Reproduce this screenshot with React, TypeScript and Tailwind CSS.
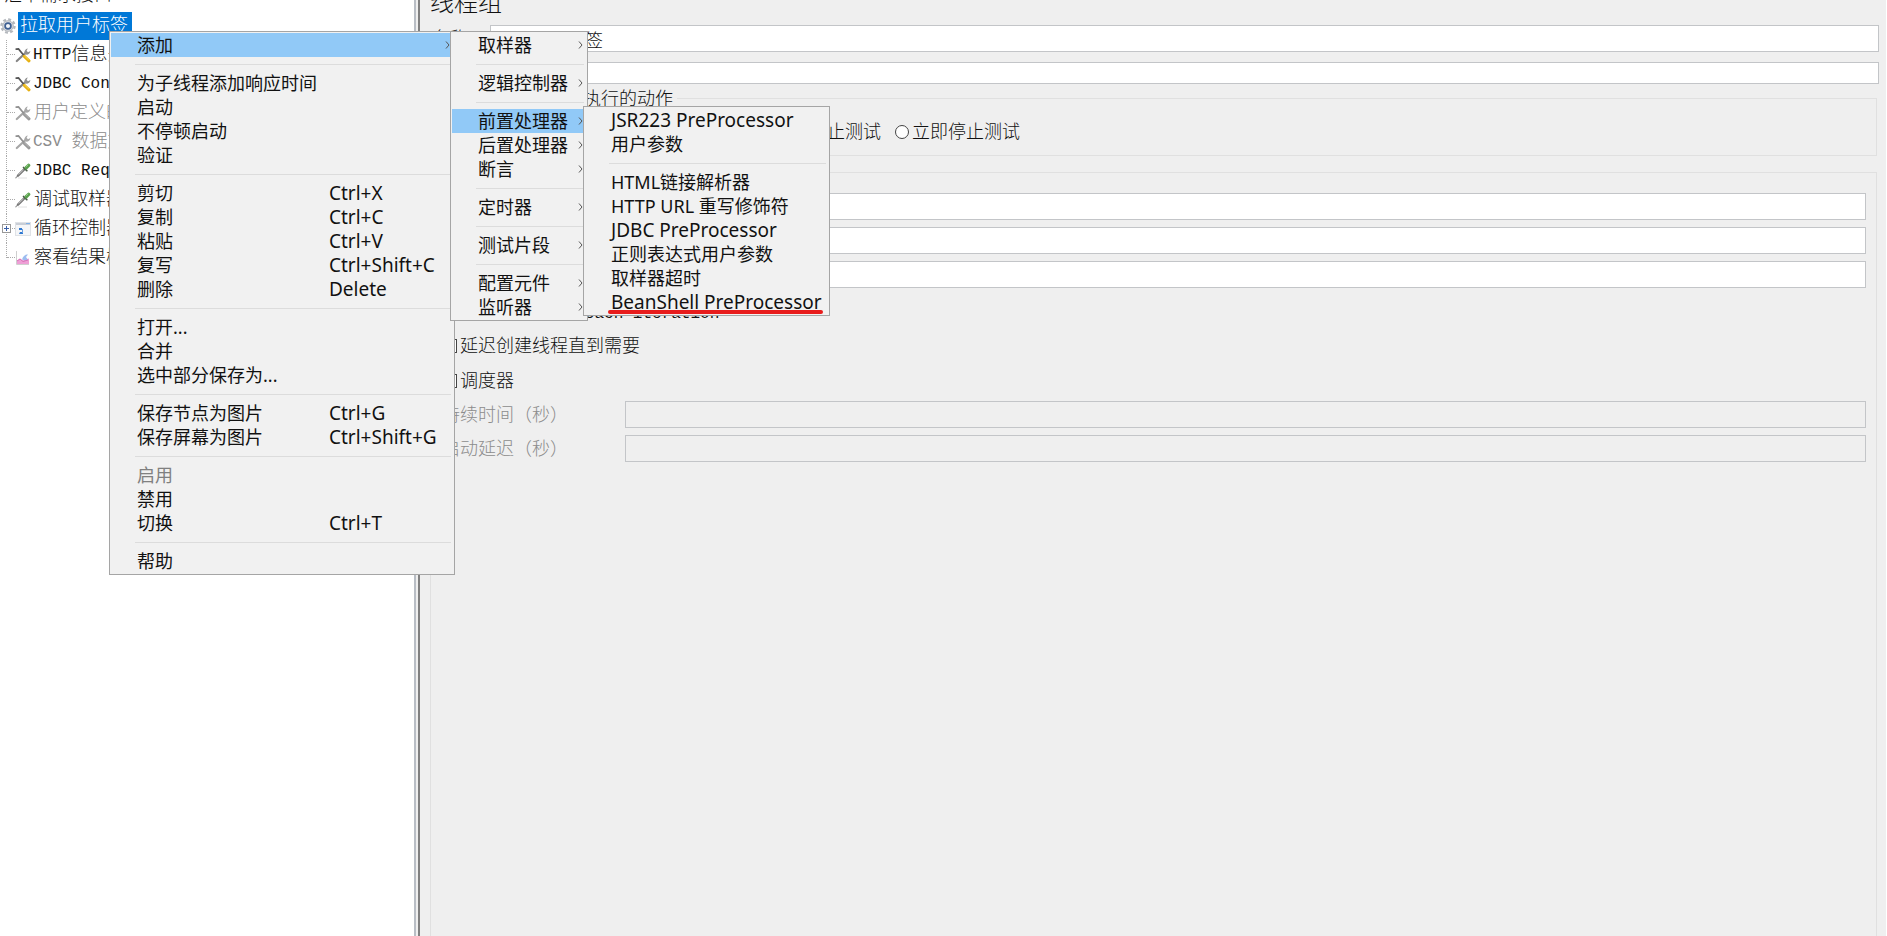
import { useState } from "react";
import type { ReactNode } from "react";

const sans = "font-['Noto_Sans','Noto_Sans_CJK_SC',sans-serif]";
const song = "font-['Liberation_Mono','Noto_Sans_CJK_SC',monospace]";

type Item = { label: string; keys?: string; latin?: boolean; active?: boolean; disabled?: boolean };

// each inner array is a group, groups are split by a separator
const mainMenu: Item[][] = [
  [{ label: "添加", active: true }],
  [
    { label: "为子线程添加响应时间" },
    { label: "启动" },
    { label: "不停顿启动" },
    { label: "验证" },
  ],
  [
    { label: "剪切", keys: "Ctrl+X" },
    { label: "复制", keys: "Ctrl+C" },
    { label: "粘贴", keys: "Ctrl+V" },
    { label: "复写", keys: "Ctrl+Shift+C" },
    { label: "删除", keys: "Delete" },
  ],
  [{ label: "打开..." }, { label: "合并" }, { label: "选中部分保存为..." }],
  [
    { label: "保存节点为图片", keys: "Ctrl+G" },
    { label: "保存屏幕为图片", keys: "Ctrl+Shift+G" },
  ],
  [
    { label: "启用", disabled: true },
    { label: "禁用" },
    { label: "切换", keys: "Ctrl+T" },
  ],
  [{ label: "帮助" }],
];

const addMenu: Item[][] = [
  [{ label: "取样器" }],
  [{ label: "逻辑控制器" }],
  [
    { label: "前置处理器", active: true },
    { label: "后置处理器" },
    { label: "断言" },
  ],
  [{ label: "定时器" }],
  [{ label: "测试片段" }],
  [{ label: "配置元件" }, { label: "监听器" }],
];

const preMenu: Item[][] = [
  [{ label: "JSR223 PreProcessor", latin: true }, { label: "用户参数" }],
  [
    { label: "HTML链接解析器" },
    { label: "HTTP URL 重写修饰符" },
    { label: "JDBC PreProcessor", latin: true },
    { label: "正则表达式用户参数" },
    { label: "取样器超时" },
    { label: "BeanShell PreProcessor", latin: true },
  ],
];

function Arrow() {
  return (
    <svg viewBox="0 0 5 8" className="h-2 w-[5px] shrink-0" fill="none" stroke="#555" aria-hidden="true">
      <path d="M1 0.5 4 4 1 7.5" />
    </svg>
  );
}

function Menu({
  groups,
  className,
  arrows,
  label,
  children,
}: {
  groups: Item[][];
  className: string;
  arrows?: boolean;
  label: string;
  children?: ReactNode;
}) {
  return (
    <div
      role="menu"
      aria-label={label}
      className={`absolute border border-[#a5a5a5] bg-[#f1f1f1] p-px text-lg text-[#111] ${sans} ${className}`}
    >
      {groups.map((group, i) => (
        <div key={i}>
          {i > 0 && (
            <div className="flex h-3.5 items-center pr-0.5 pl-6">
              <div className="h-px flex-1 bg-[#dcdcdc]" />
            </div>
          )}
          {group.map((item) => (
            <button
              key={item.label}
              type="button"
              role="menuitem"
              disabled={item.disabled}
              className={`flex h-6 w-full items-center pr-[3px] pl-[26px] text-left whitespace-nowrap disabled:text-[#808080] ${
                item.active ? "bg-[#91c9f7]" : ""
              }`}
            >
              <span className={`flex-1 leading-6 ${item.latin ? "text-[19px]" : ""}`}>{item.label}</span>
              {item.keys && <span className="w-[121px] text-[19px] leading-6">{item.keys}</span>}
              {(arrows || item.active) && <Arrow />}
            </button>
          ))}
        </div>
      ))}
      {children}
    </div>
  );
}

function GearIcon() {
  return (
    <svg viewBox="0 0 16 16" className="size-4 shrink-0" aria-hidden="true">
      <circle cx="8" cy="8" r="6.6" fill="none" stroke="#b4b8bd" strokeWidth="2.2" strokeDasharray="2.9 2.28" />
      <circle cx="8" cy="8" r="5.3" fill="#d9dce0" stroke="#b0b4ba" />
      <circle cx="8" cy="8" r="2.9" fill="#f3f6fa" stroke="#3d5f92" strokeWidth="1.7" />
    </svg>
  );
}

function ToolsIcon({ off }: { off?: boolean }) {
  return (
    <svg viewBox="0 0 16 16" className="size-4 shrink-0" fill="none" aria-hidden="true">
      <path d="M1.8 14 10.5 6" stroke={off ? "#a6a6a6" : "#858585"} strokeWidth="2.2" strokeLinecap="round" />
      <path
        d="M9.600 7c-.8-2.400.4-5 3.200-5.600l-1.200 2.400 1.400 1.400 2.400-1.200c-.2 2.800-2.600 4-4.600 3.600z"
        fill={off ? "#a8a8a8" : "#909090"}
      />
      <path d="M1.200 2.200 3.500 2 8.500 8" stroke={off ? "#919191" : "#555"} strokeWidth="1.700" strokeLinecap="round" />
      <path d="M9.300 9.300 14 13.800" stroke={off ? "#999" : "#e6b012"} strokeWidth="3" strokeLinecap="round" />
      <path d="M9.300 8.800 13.800 13" stroke={off ? "#b5b5b5" : "#f8d94e"} strokeWidth="1" />
    </svg>
  );
}

function DropperIcon() {
  return (
    <svg viewBox="0 0 16 16" className="size-4 shrink-0" fill="none" aria-hidden="true">
      <path d="M3 15h9" stroke="#e2e2e2" />
      <path d="M.800 14.800 3 12.600" stroke="#999" strokeWidth="1.200" strokeLinecap="round" />
      <path d="M3 12.600 9.500 6.200" stroke="#777" strokeWidth="2.400" strokeLinecap="round" />
      <path d="M3.500 11.600 8.500 6.800" stroke="#c4c4c4" strokeWidth="1" />
      <path d="M8.500 4.500 11.800 7.600" stroke="#4a5b48" strokeWidth="1.700" strokeLinecap="round" />
      <path d="M11.200 4.800 13.600 2.400" stroke="#58a04c" strokeWidth="3.400" strokeLinecap="round" />
      <path d="M11 3.800 13 1.900" stroke="#9ad08c" strokeWidth="1" strokeLinecap="round" />
    </svg>
  );
}

function LoopIcon() {
  return (
    <svg viewBox="0 0 16 16" className="size-4 shrink-0" aria-hidden="true">
      <rect x="0.500" y="1.500" width="15" height="13" fill="#f5f6f8" stroke="#dfe2e6" />
      <path d="M1 2h14v2H1z" fill="#c9ced6" />
      <path d="M11 2h4v1h-4z" fill="#7fb0e6" />
      <path d="M4 7h3v2H4zM5 11h3v2H4z" fill="#2f78d0" />
      <path d="M7.500 8v4" stroke="#6a9fe0" />
    </svg>
  );
}

function ChartIcon() {
  return (
    <svg viewBox="0 0 16 16" className="size-4 shrink-0" aria-hidden="true">
      <path d="M1.500 1v13.500H14" fill="none" stroke="#cfcfcf" />
      <path d="M2 14v-3.500l3-2 3 2 2-1 4-1V14z" fill="#ee9fd6" />
      <path d="M7 9.500C8 6 10 4.500 13 4.500L11 7l2 3-3 .5z" fill="#9dbcf0" />
      <path d="M2 11 5 9l3 2.500 5-1.500" fill="none" stroke="#d873b8" />
    </svg>
  );
}

const treeRows = [
  { icon: <ToolsIcon />, latin: "HTTP", text: "信息头管理器" },
  { icon: <ToolsIcon />, latin: "JDBC Connection", text: "" },
  { icon: <ToolsIcon off />, latin: "", text: "用户定义的变量", off: true },
  { icon: <ToolsIcon off />, latin: "CSV ", text: "数据文件设置", off: true },
  { icon: <DropperIcon />, latin: "JDBC Request", text: "" },
  { icon: <DropperIcon />, latin: "", text: "调试取样器" },
  { icon: <LoopIcon />, latin: "", text: "循环控制器", expandable: true },
  { icon: <ChartIcon />, latin: "", text: "察看结果树" },
];

function Tree() {
  return (
    <ul className="-mt-[18px] w-full whitespace-nowrap">
      <li className="h-[29px] pl-1 leading-7">汇丰需求接口</li>
      <li className="flex h-[29px] items-center gap-0.5">
        <GearIcon />
        <span className="bg-[#0078d7] pr-1 pl-0.5 leading-7 text-white">拉取用户标签</span>
      </li>
      {treeRows.map((row, i) => (
        <li key={i} className={`flex h-[29px] items-center ${row.off ? "text-[#8c8c8c]" : ""}`}>
          <span className="relative flex h-full w-[15px] shrink-0 items-center pl-[7px]">
            <span
              className={`absolute top-0 left-[6px] border-l border-dotted border-[#aaa] ${
                i === treeRows.length - 1 ? "h-1/2" : "h-full"
              }`}
            />
            <span className="w-full border-t border-dotted border-[#aaa]" />
            {row.expandable && (
              <button
                type="button"
                aria-label="展开"
                className="absolute left-[2px] flex size-[9px] items-center justify-center border border-[#999] bg-white"
              >
                <svg viewBox="0 0 7 7" className="size-[7px]" stroke="#3a5fa8" aria-hidden="true">
                  <path d="M1 3.500h5M3.500 1v5" />
                </svg>
              </button>
            )}
          </span>
          {row.icon}
          {row.latin && <span className="ml-0.5 text-base whitespace-pre">{row.latin}</span>}
          {row.text && <span className={row.latin ? "" : "ml-[3px]"}>{row.text}</span>}
        </li>
      ))}
    </ul>
  );
}

const errorActions = ["继续", "启动下一进程循环", "停止线程", "停止测试", "立即停止测试"];

function Field({ id, label, disabled }: { id: string; label: string; disabled?: boolean }) {
  return (
    <div className="flex h-[27px] items-center">
      <label htmlFor={id} className={`w-[184px] shrink-0 pt-0.5 pl-px ${disabled ? "text-[#8c8c8c]" : ""}`}>
        {label}
      </label>
      <input
        id={id}
        type="text"
        disabled={disabled}
        className="h-full min-w-0 flex-1 border border-[#c3c5c8] bg-white px-1 disabled:bg-[#efefef]"
      />
    </div>
  );
}

function Check({ label, latin }: { label: string; latin?: boolean }) {
  return (
    <label className="flex h-[35px] items-center gap-[3px] pl-0.5">
      <input type="checkbox" className="size-[14px] appearance-none border border-[#444] bg-white" />
      <span className={latin ? "pt-1.5 text-base" : "pt-0.5"}>{label}</span>
    </label>
  );
}

function ThreadGroupPanel() {
  const [name, setName] = useState("拉取用户标签");
  const [action, setAction] = useState("继续");

  return (
    <main className="flex min-w-0 flex-1 flex-col overflow-hidden pr-[7px] pl-[10px]">
      <h1 className="-mt-[10px] mb-[5px] text-2xl leading-[30px]">线程组</h1>
      <div className="flex h-[27px] items-center">
        <label htmlFor="name" className="w-[60px] shrink-0 pt-0.5 pl-0.5">名称：</label>
        <input
          id="name"
          type="text"
          value={name}
          onChange={(e) => setName(e.target.value)}
          className="h-full min-w-0 flex-1 border border-[#c3c5c8] bg-white px-1"
        />
      </div>
      <div className="mt-2.5 flex h-[22px] items-center">
        <label htmlFor="comment" className="w-[60px] shrink-0 pl-0.5">注释：</label>
        <input
          id="comment"
          type="text"
          className="h-full min-w-0 flex-1 border border-[#c3c5c8] bg-white px-1"
        />
      </div>

      <fieldset className="mr-0.5 border border-[#e0e0e0] pb-[3px]">
        <legend className="ml-1 pt-1 pr-1 pl-1 leading-6">在取样器错误后要执行的动作</legend>
        <div className="flex h-10 items-center gap-3.5 pl-4">
          {errorActions.map((a) => (
            <label key={a} className="flex items-center gap-[3px] whitespace-nowrap">
              <input
                type="radio"
                name="on-error"
                checked={action === a}
                onChange={() => setAction(a)}
                className="size-[14px] appearance-none rounded-full border border-[#444] bg-white"
              />
              <span className="pt-0.5">{a}</span>
            </label>
          ))}
        </div>
      </fieldset>

      <fieldset className="mt-0.5 mr-0.5 flex-1 border border-b-0 border-[#e0e0e0] pr-2.5 pl-2.5">
        <legend className="ml-1 pt-1 pr-1 pl-1 leading-6">线程属性</legend>
        <div className="flex flex-col gap-[7px] pt-[7px]">
          <Field id="threads" label="线程数：" />
          <Field id="ramp-up" label="Ramp-Up时间：" />
          <Field id="loops" label="循环次数" />
        </div>
        <div className="pt-[5px]">
          <Check label="Same user on each iteration" latin />
          <Check label="延迟创建线程直到需要" />
          <Check label="调度器" />
        </div>
        <div className="flex flex-col gap-[7px] pt-[3px]">
          <Field id="duration" label="持续时间（秒）" disabled />
          <Field id="delay" label="启动延迟（秒）" disabled />
        </div>
      </fieldset>
    </main>
  );
}

export default function App() {
  return (
    <div className={`relative flex h-screen overflow-hidden bg-[#efefef] text-lg font-light text-[#111] ${song}`}>
      <aside className="w-[414px] shrink-0 overflow-hidden bg-white">
        <Tree />
      </aside>
      <div className="w-1.5 shrink-0 border-r-2 border-l-2 border-r-[#808080] border-l-[#b9bec5]" />
      <ThreadGroupPanel />
      <div className="w-px shrink-0 bg-white" />

      <div className="font-normal">
        <Menu groups={mainMenu} label="线程组菜单" className="top-[31px] left-[109px] w-[346px]" />
        <Menu groups={addMenu} label="添加" arrows className="top-[31px] left-[450px] w-[138px]" />
        <Menu groups={preMenu} label="前置处理器" className="top-[106px] left-[583px] w-[247px]">
          <div className="absolute right-1.5 bottom-px left-6 h-1 rounded-full bg-[#e81c1c]" />
        </Menu>
      </div>
    </div>
  );
}
